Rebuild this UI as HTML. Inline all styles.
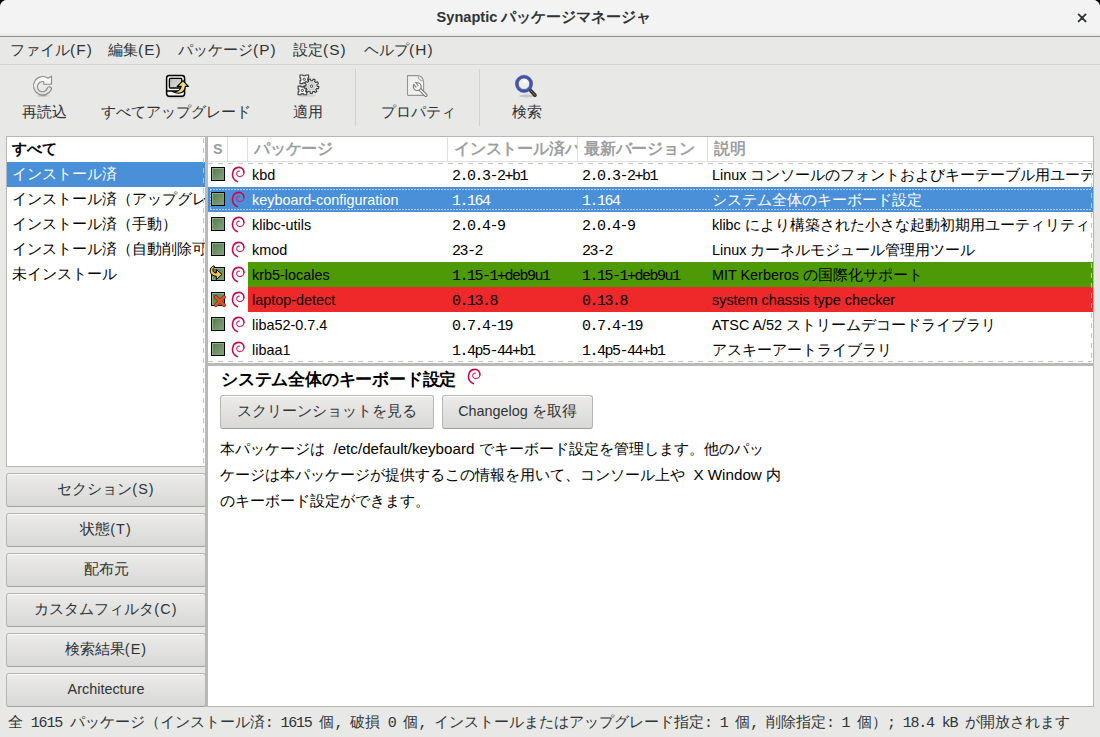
<!DOCTYPE html>
<html><head><meta charset="utf-8">
<style>
*{margin:0;padding:0;box-sizing:border-box}
html,body{width:1100px;height:737px;overflow:hidden;background:#000}
body{font-family:"Liberation Sans",sans-serif;font-size:15px;color:#2e3436;position:relative}
.a{position:absolute;white-space:nowrap}
j{display:inline-block;width:1em;text-align:center}
.l{font-size:14.4px}
.m{font-family:"Liberation Mono",monospace;letter-spacing:-1.5px}
.desc .l{font-size:15.2px;white-space:pre}
.st .m{letter-spacing:-1.2px}
#win{position:absolute;left:0;top:0;width:1100px;height:737px;background:#e8e8e7;border-radius:7px 7px 0 0;overflow:hidden}
#title{left:0;top:0;width:1100px;height:37px;background:linear-gradient(#f3f3f3 0,#f3f3f3 33px,#e4e4e3 36px);border-bottom:1px solid #8d8d89}
#title .t{left:-6px;width:1100px;top:8px;text-align:center;font-size:15px;font-weight:bold;color:#2e3436}
#title .lt{font-size:14.6px}
.menu{top:41px;color:#2e3436}
.menu .l{font-size:15.4px;letter-spacing:1.1px}
.sep{width:1px;background:#d0d0cd;top:69px;height:57px}
.box{position:absolute;background:#fff;border:1px solid #b6b6b3}
.row{position:absolute;left:0;height:25px;white-space:nowrap;line-height:23px;overflow:hidden}
.btn{position:absolute;left:6px;width:200px;height:34px;border:1px solid #b6b6b3;border-bottom-color:#a1a19c;border-radius:3px;background:linear-gradient(#ecebea,#d8d8d6);text-align:center;line-height:30px;color:#2e3436;box-shadow:inset 0 1px #fdfdfd;white-space:nowrap}
.btn .l{letter-spacing:1.1px}
.btn .ls0{letter-spacing:0}
.cb{position:absolute;width:14px;height:14px;border:1px solid #000;background:linear-gradient(135deg,#5b7651,#82a67a);box-shadow:inset 1px 1px #87b47f,inset -1px -1px #78a370}
.c{position:absolute;top:0;white-space:nowrap;overflow:hidden;padding-right:3px}
.hdr{position:absolute;left:0;top:0;width:885px;height:25px;border-bottom:1px solid #dededb}
.hdr span.h{position:absolute;top:0px;line-height:24px;color:#9c9f9f;font-weight:bold;font-size:15.8px;white-space:nowrap;overflow:hidden}
.hdr i{position:absolute;top:0;width:1px;height:24px;background:#dededb}
.tr{position:absolute;left:0;width:885px;height:25px;line-height:25px;color:#000}
.tr.sel{background:#4a90d9;color:#fff}
.tr .bgc{position:absolute;left:40px;top:0;width:845px;height:25px}
.tr .cb{left:3px;top:5px}
.tr .sw{position:absolute;left:23px;top:4px}
.tr .ov{position:absolute}
.focus{position:absolute;left:2px;top:2px;width:882px;height:21px;
 background:repeating-linear-gradient(to right,rgba(255,255,255,.55) 0 2px,transparent 2px 3px) top/100% 1px no-repeat,
 repeating-linear-gradient(to right,rgba(255,255,255,.55) 0 2px,transparent 2px 3px) bottom/100% 1px no-repeat,
 repeating-linear-gradient(to bottom,rgba(255,255,255,.55) 0 2px,transparent 2px 3px) left/1px 100% no-repeat}
.dh{position:absolute;height:1px;background:repeating-linear-gradient(to right,#c4c4c1 0 5px,transparent 5px 10px)}
.dv{position:absolute;width:1px;background:repeating-linear-gradient(to bottom,#c4c4c1 0 5px,transparent 5px 10px)}
</style></head><body>
<div id="win">
<div id="title" class="a"><div class="t a"><span class="lt">Synaptic </span><j>パ</j><j>ッ</j><j>ケ</j><j>ー</j><j>ジ</j><j>マ</j><j>ネ</j><j>ー</j><j>ジ</j><j>ャ</j></div><svg class="a" style="left:1076px;top:12px" width="12" height="12" viewBox="0 0 12 12"><path d="M2.6 2.4L9.6 9.4M9.6 2.4L2.6 9.4" stroke="#2e3436" stroke-width="1.9" stroke-linecap="round"/></svg></div>
<div class="a" style="left:0;top:64px;width:1100px;height:1px;background:#d3d3cf"></div>
<span class="a menu" style="left:10px"><j>フ</j><j>ァ</j><j>イ</j><j>ル</j><span class="l">(F)</span></span>
<span class="a menu" style="left:108px"><j>編</j><j>集</j><span class="l">(E)</span></span>
<span class="a menu" style="left:178px"><j>パ</j><j>ッ</j><j>ケ</j><j>ー</j><j>ジ</j><span class="l">(P)</span></span>
<span class="a menu" style="left:293px"><j>設</j><j>定</j><span class="l">(S)</span></span>
<span class="a menu" style="left:364px"><j>ヘ</j><j>ル</j><j>プ</j><span class="l">(H)</span></span>
<div class="a sep" style="left:355px"></div><div class="a sep" style="left:479px"></div>
<span class="a" style="left:22px;top:103px"><j>再</j><j>読</j><j>込</j></span>
<span class="a" style="left:101px;top:103px"><j>す</j><j>べ</j><j>て</j><j>ア</j><j>ッ</j><j>プ</j><j>グ</j><j>レ</j><j>ー</j><j>ド</j></span>
<span class="a" style="left:293px;top:103px"><j>適</j><j>用</j></span>
<span class="a" style="left:381px;top:103px"><j>プ</j><j>ロ</j><j>パ</j><j>テ</j><j>ィ</j></span>
<span class="a" style="left:512px;top:103px"><j>検</j><j>索</j></span>

 <!-- toolbar icons -->
 <svg class="a" style="left:30px;top:72px" width="26" height="26" viewBox="0 0 26 26">
  <defs><linearGradient id="rg" x1="0" y1="0" x2="0" y2="1"><stop offset="0" stop-color="#ffffff"/><stop offset="1" stop-color="#dcdcda"/></linearGradient>
  <radialGradient id="sh"><stop offset="0" stop-color="#000" stop-opacity=".22"/><stop offset="1" stop-color="#000" stop-opacity="0"/></radialGradient></defs>
  <ellipse cx="13" cy="23.8" rx="8" ry="1.8" fill="url(#sh)"/>
  <path d="M21.2 17.7A9.3 9.3 0 1 1 18.1 6.2L21.5 4.1V12.3H13.8V9.7A5.1 5.1 0 1 0 17.4 16A1.95 1.95 0 0 1 21.2 17.7Z" fill="url(#rg)" stroke="#8a8a88" stroke-width="1.1" stroke-linejoin="round"/>
 </svg>
 <svg class="a" style="left:164px;top:73px" width="26" height="26" viewBox="0 0 26 26">
  <ellipse cx="12" cy="24.3" rx="10" ry="1.2" fill="#000" opacity=".12"/>
  <rect x="2.6" y="2.6" width="18" height="20.6" rx="2.6" fill="#f4f4f4" stroke="#000" stroke-width="1.5"/>
  <defs><linearGradient id="scr" x1="0" y1="0" x2="1" y2="1"><stop offset="0" stop-color="#b9bcbd"/><stop offset="1" stop-color="#dfe1e2"/></linearGradient></defs>
  <rect x="5.4" y="5.4" width="12.4" height="9.6" rx="1" fill="url(#scr)" stroke="#000" stroke-width="1.3"/>
  <path d="M2.6 18H20.6" stroke="#000" stroke-width="1.3"/>
  <path d="M8.4 18.6C12.8 19.2 16.6 17.4 17.2 13.4L13.2 13.4L19 7.6L24.4 13.4L21.3 13.4C21 18.8 16.4 22.4 8.4 18.6Z" fill="#f4d36c" stroke="#000" stroke-width="1.1" stroke-linejoin="round"/><path d="M19.2 10.2L19.4 15.6" stroke="#fff6c8" stroke-width="1" opacity=".6"/>
 </svg>
 <svg class="a" style="left:290px;top:68px" width="32" height="32" viewBox="0 0 32 32">
  <ellipse cx="17" cy="27.5" rx="9" ry="1.5" fill="#000" opacity=".1"/>
  <g stroke="#3a3d3e" stroke-width="1.1" stroke-linejoin="round">
   <path d="M10.00 7.00H13.00V7.80H15.60V7.00H18.60V10.00H17.80V12.60H18.60V15.60H15.60V14.80H13.00V15.60H10.00V12.60H10.80V10.00H10.00Z" fill="#f8f8f8"/>
   <path d="M8.10 18.10H11.10V18.90H13.70V18.10H16.70V21.10H15.90V23.70H16.70V26.70H13.70V25.90H11.10V26.70H8.10V23.70H8.90V21.10H8.10Z" fill="#f8f8f8"/>
   <path d="M28.89 18.65 L28.48 20.67 L26.64 20.43 L25.82 21.76 L26.87 23.29 L25.26 24.57 L24.00 23.21 L22.52 23.71 L22.34 25.55 L20.28 25.50 L20.20 23.65 L18.75 23.08 L17.42 24.37 L15.88 23.01 L17.00 21.53 L16.26 20.16 L14.41 20.31 L14.10 18.27 L15.91 17.86 L16.22 16.33 L14.71 15.25 L15.79 13.50 L17.44 14.35 L18.65 13.38 L18.19 11.58 L20.15 10.92 L20.86 12.64 L22.42 12.68 L23.22 11.00 L25.14 11.76 L24.59 13.53 L25.76 14.56 L27.45 13.79 L28.43 15.60 L26.87 16.61 L27.10 18.15Z" fill="#e6e6e4"/>
  </g>
  <circle cx="14.3" cy="11.3" r="1.1" fill="none" stroke="#3a3d3e" stroke-width="1"/>
  <circle cx="12.4" cy="22.4" r="1.1" fill="none" stroke="#3a3d3e" stroke-width="1"/>
  <circle cx="21.5" cy="18.2" r="3.6" fill="#dcdcda" stroke="#c8c8c6" stroke-width="1"/>
  <circle cx="21.5" cy="18.2" r="1.2" fill="#fff" stroke="#3a3d3e" stroke-width="1"/>
 </svg>
 <svg class="a" style="left:404px;top:72px" width="26" height="26" viewBox="0 0 26 26">
  <path d="M3.5 3.6h10.3c3.2.4 5.6 3 5.8 6.4V22.4a1 1 0 0 1-1 1H4.5a1 1 0 0 1-1-1z" fill="#f1f1f0" stroke="#959593" stroke-width="1.1"/>
  <path d="M14 3.8c.6 1.8.5 3.2 1.4 4.1 1 .8 2.4.6 3.9.9" fill="#e4e4e2" stroke="#a8a8a6" stroke-width="1"/>
  <path d="M13.2 14.6L21.8 23.2" stroke="#777775" stroke-width="3.6" stroke-linecap="round"/>
  <path d="M13.2 14.6L21.8 23.2" stroke="#f6f6f6" stroke-width="1.5" stroke-linecap="round"/>
  <circle cx="13.2" cy="14.6" r="3.9" fill="#f6f6f6" stroke="#777775" stroke-width="1.1"/>
  <path d="M13.2 14.6L10.37 10.98" stroke="#777775" stroke-width="3.8" stroke-linecap="butt"/>
  <path d="M13.02 14.36L10.00 10.50" stroke="#f1f1f0" stroke-width="1.8" stroke-linecap="butt"/>
 </svg>
 <svg class="a" style="left:512px;top:72px" width="28" height="28" viewBox="0 0 28 28">
  <ellipse cx="15" cy="24" rx="8" ry="1.5" fill="#000" opacity=".15"/>
  <path d="M17.8 17.6l5.2 5.6" stroke="#2b2b2b" stroke-width="3.6" stroke-linecap="round"/>
  <path d="M17.8 17.6l5.2 5.6" stroke="#9a9287" stroke-width="1" stroke-linecap="round" stroke-dasharray="1 1.2"/>
  <circle cx="12" cy="11.8" r="7.2" fill="#ededec" stroke="#4455b0" stroke-width="2.8"/>
  <circle cx="12" cy="11.8" r="5.7" fill="none" stroke="#1d2a6b" stroke-width=".6" opacity=".8"/>
  <circle cx="12" cy="11.8" r="8.6" fill="none" stroke="#2a3a90" stroke-width=".6" opacity=".8"/>
  <circle cx="12.6" cy="9.2" r="2" fill="#fff" opacity=".9"/>
 </svg>

<div class="box" style="left:6px;top:136px;width:200px;height:331px;overflow:hidden;border-right:none">
<div class="row" style="top:0px;width:199px;padding-left:5px;font-weight:bold;color:#000"><j>す</j><j>べ</j><j>て</j></div>
<div class="row" style="top:25px;width:199px;padding-left:5px;background:#4a90d9;color:#fff"><j>イ</j><j>ン</j><j>ス</j><j>ト</j><j>ー</j><j>ル</j><j>済</j></div>
<div class="row" style="top:50px;width:199px;padding-left:5px;color:#000"><j>イ</j><j>ン</j><j>ス</j><j>ト</j><j>ー</j><j>ル</j><j>済</j><j>（</j><j>ア</j><j>ッ</j><j>プ</j><j>グ</j><j>レ</j><j>ー</j><j>ド</j><j>可</j><j>能</j><j>）</j></div>
<div class="row" style="top:75px;width:199px;padding-left:5px;color:#000"><j>イ</j><j>ン</j><j>ス</j><j>ト</j><j>ー</j><j>ル</j><j>済</j><j>（</j><j>手</j><j>動</j><j>）</j></div>
<div class="row" style="top:100px;width:199px;padding-left:5px;color:#000"><j>イ</j><j>ン</j><j>ス</j><j>ト</j><j>ー</j><j>ル</j><j>済</j><j>（</j><j>自</j><j>動</j><j>削</j><j>除</j><j>可</j><j>能</j><j>）</j></div>
<div class="row" style="top:125px;width:199px;padding-left:5px;color:#000"><j>未</j><j>イ</j><j>ン</j><j>ス</j><j>ト</j><j>ー</j><j>ル</j></div>
<div class="dv" style="left:196px;top:1px;height:328px"></div>
</div>
<div class="a" style="left:205px;top:136px;width:3px;height:571px;background:#b9b9b5"></div>
<div class="btn" style="top:473px"><j>セ</j><j>ク</j><j>シ</j><j>ョ</j><j>ン</j><span class="l">(S)</span></div>
<div class="btn" style="top:513px"><j>状</j><j>態</j><span class="l">(T)</span></div>
<div class="btn" style="top:553px"><j>配</j><j>布</j><j>元</j></div>
<div class="btn" style="top:593px"><j>カ</j><j>ス</j><j>タ</j><j>ム</j><j>フ</j><j>ィ</j><j>ル</j><j>タ</j><span class="l">(C)</span></div>
<div class="btn" style="top:633px"><j>検</j><j>索</j><j>結</j><j>果</j><span class="l">(E)</span></div>
<div class="btn" style="top:673px"><span class="l ls0">Architecture</span></div>
<div class="box" id="tree" style="left:208px;top:136px;width:886px;height:227px;overflow:hidden;border-left:none;border-bottom:none">
<div class="hdr"><span class="h" style="left:5px"><span class="l">S</span></span><i style="left:19px"></i><i style="left:39px"></i><span class="h" style="left:46px"><j>パ</j><j>ッ</j><j>ケ</j><j>ー</j><j>ジ</j></span><i style="left:239px"></i><span class="h" style="left:246px;width:123px"><j>イ</j><j>ン</j><j>ス</j><j>ト</j><j>ー</j><j>ル</j><j>済</j><j>バ</j><j>ー</j><j>ジ</j><j>ョ</j><j>ン</j></span><i style="left:369px"></i><span class="h" style="left:376px"><j>最</j><j>新</j><j>バ</j><j>ー</j><j>ジ</j><j>ョ</j><j>ン</j></span><i style="left:499px"></i><span class="h" style="left:506px"><j>説</j><j>明</j></span></div>
<div class="tr" style="top:25px">
<div class="cb"></div>
<svg class="sw" width="15" height="18" viewBox="0 0 15 18"><path d="M6.4 15.6C2.6 13.8 1.2 10.4 1.6 7.4 2 3.8 4.6 1.5 7.8 1.4c3.2-.1 5.4 2.4 5.1 5.4" fill="none" stroke="#c8094e" stroke-width="1.6" stroke-linecap="round"/><path d="M12.9 6.8c-.2 2.3-2 3.8-4.3 3.8-1.8 0-3-1.4-2.9-3 .1-1.6 1.3-2.7 2.7-2.5" fill="none" stroke="#cf2a63" stroke-width="1.15" stroke-linecap="round"/></svg>
<span class="c" style="left:44px"><span class="l">kbd</span></span>
<span class="c" style="left:244px"><span class="m">2.0.3-2+b1</span></span>
<span class="c" style="left:374px"><span class="m">2.0.3-2+b1</span></span>
<span class="c" style="left:504px;width:381px"><span class="l">Linux </span><j>コ</j><j>ン</j><j>ソ</j><j>ー</j><j>ル</j><j>の</j><j>フ</j><j>ォ</j><j>ン</j><j>ト</j><j>お</j><j>よ</j><j>び</j><j>キ</j><j>ー</j><j>テ</j><j>ー</j><j>ブ</j><j>ル</j><j>用</j><j>ユ</j><j>ー</j><j>テ</j><j>ィ</j><j>リ</j><j>テ</j><j>ィ</j></span>
</div>
<div class="tr sel" style="top:50px">
<div class="cb"></div>
<svg class="sw" width="15" height="18" viewBox="0 0 15 18"><path d="M6.4 15.6C2.6 13.8 1.2 10.4 1.6 7.4 2 3.8 4.6 1.5 7.8 1.4c3.2-.1 5.4 2.4 5.1 5.4" fill="none" stroke="#c8094e" stroke-width="1.6" stroke-linecap="round"/><path d="M12.9 6.8c-.2 2.3-2 3.8-4.3 3.8-1.8 0-3-1.4-2.9-3 .1-1.6 1.3-2.7 2.7-2.5" fill="none" stroke="#cf2a63" stroke-width="1.15" stroke-linecap="round"/></svg>
<span class="c" style="left:44px"><span class="l">keyboard-configuration</span></span>
<span class="c" style="left:244px"><span class="m">1.164</span></span>
<span class="c" style="left:374px"><span class="m">1.164</span></span>
<span class="c" style="left:504px;width:381px"><j>シ</j><j>ス</j><j>テ</j><j>ム</j><j>全</j><j>体</j><j>の</j><j>キ</j><j>ー</j><j>ボ</j><j>ー</j><j>ド</j><j>設</j><j>定</j></span>
<div class="focus"></div>
</div>
<div class="tr" style="top:75px">
<div class="cb"></div>
<svg class="sw" width="15" height="18" viewBox="0 0 15 18"><path d="M6.4 15.6C2.6 13.8 1.2 10.4 1.6 7.4 2 3.8 4.6 1.5 7.8 1.4c3.2-.1 5.4 2.4 5.1 5.4" fill="none" stroke="#c8094e" stroke-width="1.6" stroke-linecap="round"/><path d="M12.9 6.8c-.2 2.3-2 3.8-4.3 3.8-1.8 0-3-1.4-2.9-3 .1-1.6 1.3-2.7 2.7-2.5" fill="none" stroke="#cf2a63" stroke-width="1.15" stroke-linecap="round"/></svg>
<span class="c" style="left:44px"><span class="l">klibc-utils</span></span>
<span class="c" style="left:244px"><span class="m">2.0.4-9</span></span>
<span class="c" style="left:374px"><span class="m">2.0.4-9</span></span>
<span class="c" style="left:504px;width:381px"><span class="l">klibc </span><j>に</j><j>よ</j><j>り</j><j>構</j><j>築</j><j>さ</j><j>れ</j><j>た</j><j>小</j><j>さ</j><j>な</j><j>起</j><j>動</j><j>初</j><j>期</j><j>用</j><j>ユ</j><j>ー</j><j>テ</j><j>ィ</j><j>リ</j><j>テ</j><j>ィ</j></span>
</div>
<div class="tr" style="top:100px">
<div class="cb"></div>
<svg class="sw" width="15" height="18" viewBox="0 0 15 18"><path d="M6.4 15.6C2.6 13.8 1.2 10.4 1.6 7.4 2 3.8 4.6 1.5 7.8 1.4c3.2-.1 5.4 2.4 5.1 5.4" fill="none" stroke="#c8094e" stroke-width="1.6" stroke-linecap="round"/><path d="M12.9 6.8c-.2 2.3-2 3.8-4.3 3.8-1.8 0-3-1.4-2.9-3 .1-1.6 1.3-2.7 2.7-2.5" fill="none" stroke="#cf2a63" stroke-width="1.15" stroke-linecap="round"/></svg>
<span class="c" style="left:44px"><span class="l">kmod</span></span>
<span class="c" style="left:244px"><span class="m">23-2</span></span>
<span class="c" style="left:374px"><span class="m">23-2</span></span>
<span class="c" style="left:504px;width:381px"><span class="l">Linux </span><j>カ</j><j>ー</j><j>ネ</j><j>ル</j><j>モ</j><j>ジ</j><j>ュ</j><j>ー</j><j>ル</j><j>管</j><j>理</j><j>用</j><j>ツ</j><j>ー</j><j>ル</j></span>
</div>
<div class="tr" style="top:125px">
<div class="bgc" style="background:#4e9a06"></div>
<div class="cb"></div>
<svg class="ov" style="left:0;top:0" width="18" height="22" viewBox="0 0 18 22"><path d="M6 3.8C2.5 4.8 1.2 8.5 3 11.5 4 13.2 6 14 8.3 14.2L8.3 17.6 14 12.4 8.3 7.6 8.3 11C6.4 11 5 10 4.9 8.4 4.8 6.8 5.6 5.6 6.8 5Z" fill="#f1c650" stroke="#000" stroke-width="1" stroke-linejoin="round"/></svg>
<svg class="sw" width="15" height="18" viewBox="0 0 15 18"><path d="M6.4 15.6C2.6 13.8 1.2 10.4 1.6 7.4 2 3.8 4.6 1.5 7.8 1.4c3.2-.1 5.4 2.4 5.1 5.4" fill="none" stroke="#c8094e" stroke-width="1.6" stroke-linecap="round"/><path d="M12.9 6.8c-.2 2.3-2 3.8-4.3 3.8-1.8 0-3-1.4-2.9-3 .1-1.6 1.3-2.7 2.7-2.5" fill="none" stroke="#cf2a63" stroke-width="1.15" stroke-linecap="round"/></svg>
<span class="c" style="left:44px"><span class="l">krb5-locales</span></span>
<span class="c" style="left:244px"><span class="m">1.15-1+deb9u1</span></span>
<span class="c" style="left:374px"><span class="m">1.15-1+deb9u1</span></span>
<span class="c" style="left:504px;width:381px"><span class="l">MIT Kerberos </span><j>の</j><j>国</j><j>際</j><j>化</j><j>サ</j><j>ポ</j><j>ー</j><j>ト</j></span>
</div>
<div class="tr" style="top:150px">
<div class="bgc" style="background:#ef2929"></div>
<div class="cb"></div>
<svg class="ov" style="left:0;top:0" width="20" height="22" viewBox="0 0 20 22"><path d="M7.9 10.1L16 18.1M16 10.1L7.9 18.1" stroke="#7a2a0c" stroke-width="4" stroke-linecap="round"/><path d="M7.9 10.1L16 18.1M16 10.1L7.9 18.1" stroke="#dc5524" stroke-width="2.6" stroke-linecap="round"/></svg>
<svg class="sw" width="15" height="18" viewBox="0 0 15 18"><path d="M6.4 15.6C2.6 13.8 1.2 10.4 1.6 7.4 2 3.8 4.6 1.5 7.8 1.4c3.2-.1 5.4 2.4 5.1 5.4" fill="none" stroke="#c8094e" stroke-width="1.6" stroke-linecap="round"/><path d="M12.9 6.8c-.2 2.3-2 3.8-4.3 3.8-1.8 0-3-1.4-2.9-3 .1-1.6 1.3-2.7 2.7-2.5" fill="none" stroke="#cf2a63" stroke-width="1.15" stroke-linecap="round"/></svg>
<span class="c" style="left:44px"><span class="l">laptop-detect</span></span>
<span class="c" style="left:244px"><span class="m">0.13.8</span></span>
<span class="c" style="left:374px"><span class="m">0.13.8</span></span>
<span class="c" style="left:504px;width:381px"><span class="l">system chassis type checker</span></span>
</div>
<div class="tr" style="top:175px">
<div class="cb"></div>
<svg class="sw" width="15" height="18" viewBox="0 0 15 18"><path d="M6.4 15.6C2.6 13.8 1.2 10.4 1.6 7.4 2 3.8 4.6 1.5 7.8 1.4c3.2-.1 5.4 2.4 5.1 5.4" fill="none" stroke="#c8094e" stroke-width="1.6" stroke-linecap="round"/><path d="M12.9 6.8c-.2 2.3-2 3.8-4.3 3.8-1.8 0-3-1.4-2.9-3 .1-1.6 1.3-2.7 2.7-2.5" fill="none" stroke="#cf2a63" stroke-width="1.15" stroke-linecap="round"/></svg>
<span class="c" style="left:44px"><span class="l">liba52-0.7.4</span></span>
<span class="c" style="left:244px"><span class="m">0.7.4-19</span></span>
<span class="c" style="left:374px"><span class="m">0.7.4-19</span></span>
<span class="c" style="left:504px;width:381px"><span class="l">ATSC A/52 </span><j>ス</j><j>ト</j><j>リ</j><j>ー</j><j>ム</j><j>デ</j><j>コ</j><j>ー</j><j>ド</j><j>ラ</j><j>イ</j><j>ブ</j><j>ラ</j><j>リ</j></span>
</div>
<div class="tr" style="top:200px">
<div class="cb"></div>
<svg class="sw" width="15" height="18" viewBox="0 0 15 18"><path d="M6.4 15.6C2.6 13.8 1.2 10.4 1.6 7.4 2 3.8 4.6 1.5 7.8 1.4c3.2-.1 5.4 2.4 5.1 5.4" fill="none" stroke="#c8094e" stroke-width="1.6" stroke-linecap="round"/><path d="M12.9 6.8c-.2 2.3-2 3.8-4.3 3.8-1.8 0-3-1.4-2.9-3 .1-1.6 1.3-2.7 2.7-2.5" fill="none" stroke="#cf2a63" stroke-width="1.15" stroke-linecap="round"/></svg>
<span class="c" style="left:44px"><span class="l">libaa1</span></span>
<span class="c" style="left:244px"><span class="m">1.4p5-44+b1</span></span>
<span class="c" style="left:374px"><span class="m">1.4p5-44+b1</span></span>
<span class="c" style="left:504px;width:381px"><j>ア</j><j>ス</j><j>キ</j><j>ー</j><j>ア</j><j>ー</j><j>ト</j><j>ラ</j><j>イ</j><j>ブ</j><j>ラ</j><j>リ</j></span>
</div>
<div class="dh" style="left:0;top:26px;width:884px"></div><div class="dh" style="left:0;top:224px;width:884px"></div><div class="dv" style="left:883px;top:26px;height:199px"></div>
</div>
<div class="a" style="left:208px;top:363px;width:886px;height:3px;background:#b9b9b5"></div>
<div class="box" style="left:208px;top:366px;width:886px;height:341px;border-left:none;border-top:none">
<div class="a" style="left:13px;top:2px;font-weight:bold;color:#000;font-size:16.8px"><j>シ</j><j>ス</j><j>テ</j><j>ム</j><j>全</j><j>体</j><j>の</j><j>キ</j><j>ー</j><j>ボ</j><j>ー</j><j>ド</j><j>設</j><j>定</j></div>
<div class="a" style="left:259px;top:2px"><svg class="sw" width="15" height="18" viewBox="0 0 15 18"><path d="M6.4 15.6C2.6 13.8 1.2 10.4 1.6 7.4 2 3.8 4.6 1.5 7.8 1.4c3.2-.1 5.4 2.4 5.1 5.4" fill="none" stroke="#c8094e" stroke-width="1.6" stroke-linecap="round"/><path d="M12.9 6.8c-.2 2.3-2 3.8-4.3 3.8-1.8 0-3-1.4-2.9-3 .1-1.6 1.3-2.7 2.7-2.5" fill="none" stroke="#cf2a63" stroke-width="1.15" stroke-linecap="round"/></svg></div>
<div class="btn" style="left:12px;top:29px;width:214px"><j>ス</j><j>ク</j><j>リ</j><j>ー</j><j>ン</j><j>シ</j><j>ョ</j><j>ッ</j><j>ト</j><j>を</j><j>見</j><j>る</j></div>
<div class="btn" style="left:234px;top:29px;width:151px"><span class="l ls0">Changelog </span><j>を</j><j>取</j><j>得</j></div>
<div class="a desc" style="left:12px;top:70px;line-height:26px;color:#000"><j>本</j><j>パ</j><j>ッ</j><j>ケ</j><j>ー</j><j>ジ</j><j>は</j><span class="l">  /etc/default/keyboard </span><j>で</j><j>キ</j><j>ー</j><j>ボ</j><j>ー</j><j>ド</j><j>設</j><j>定</j><j>を</j><j>管</j><j>理</j><j>し</j><j>ま</j><j>す</j><j>。</j><j>他</j><j>の</j><j>パ</j><j>ッ</j><br><j>ケ</j><j>ー</j><j>ジ</j><j>は</j><j>本</j><j>パ</j><j>ッ</j><j>ケ</j><j>ー</j><j>ジ</j><j>が</j><j>提</j><j>供</j><j>す</j><j>る</j><j>こ</j><j>の</j><j>情</j><j>報</j><j>を</j><j>用</j><j>い</j><j>て</j><j>、</j><j>コ</j><j>ン</j><j>ソ</j><j>ー</j><j>ル</j><j>上</j><j>や</j><span class="l">  X Window </span><j>内</j><br><j>の</j><j>キ</j><j>ー</j><j>ボ</j><j>ー</j><j>ド</j><j>設</j><j>定</j><j>が</j><j>で</j><j>き</j><j>ま</j><j>す</j><j>。</j></div>
</div>
<div class="a st" style="left:8px;top:713px"><j>全</j><span class="m"> 1615 </span><j>パ</j><j>ッ</j><j>ケ</j><j>ー</j><j>ジ</j><j>（</j><j>イ</j><j>ン</j><j>ス</j><j>ト</j><j>ー</j><j>ル</j><j>済</j><span class="m">: 1615 </span><j>個</j><span class="m">, </span><j>破</j><j>損</j><span class="m"> 0 </span><j>個</j><span class="m">, </span><j>イ</j><j>ン</j><j>ス</j><j>ト</j><j>ー</j><j>ル</j><j>ま</j><j>た</j><j>は</j><j>ア</j><j>ッ</j><j>プ</j><j>グ</j><j>レ</j><j>ー</j><j>ド</j><j>指</j><j>定</j><span class="m">: 1 </span><j>個</j><span class="m">, </span><j>削</j><j>除</j><j>指</j><j>定</j><span class="m">: 1 </span><j>個</j><j>）</j><span class="m">; 18.4 kB </span><j>が</j><j>開</j><j>放</j><j>さ</j><j>れ</j><j>ま</j><j>す</j></div>
</div></body></html>
